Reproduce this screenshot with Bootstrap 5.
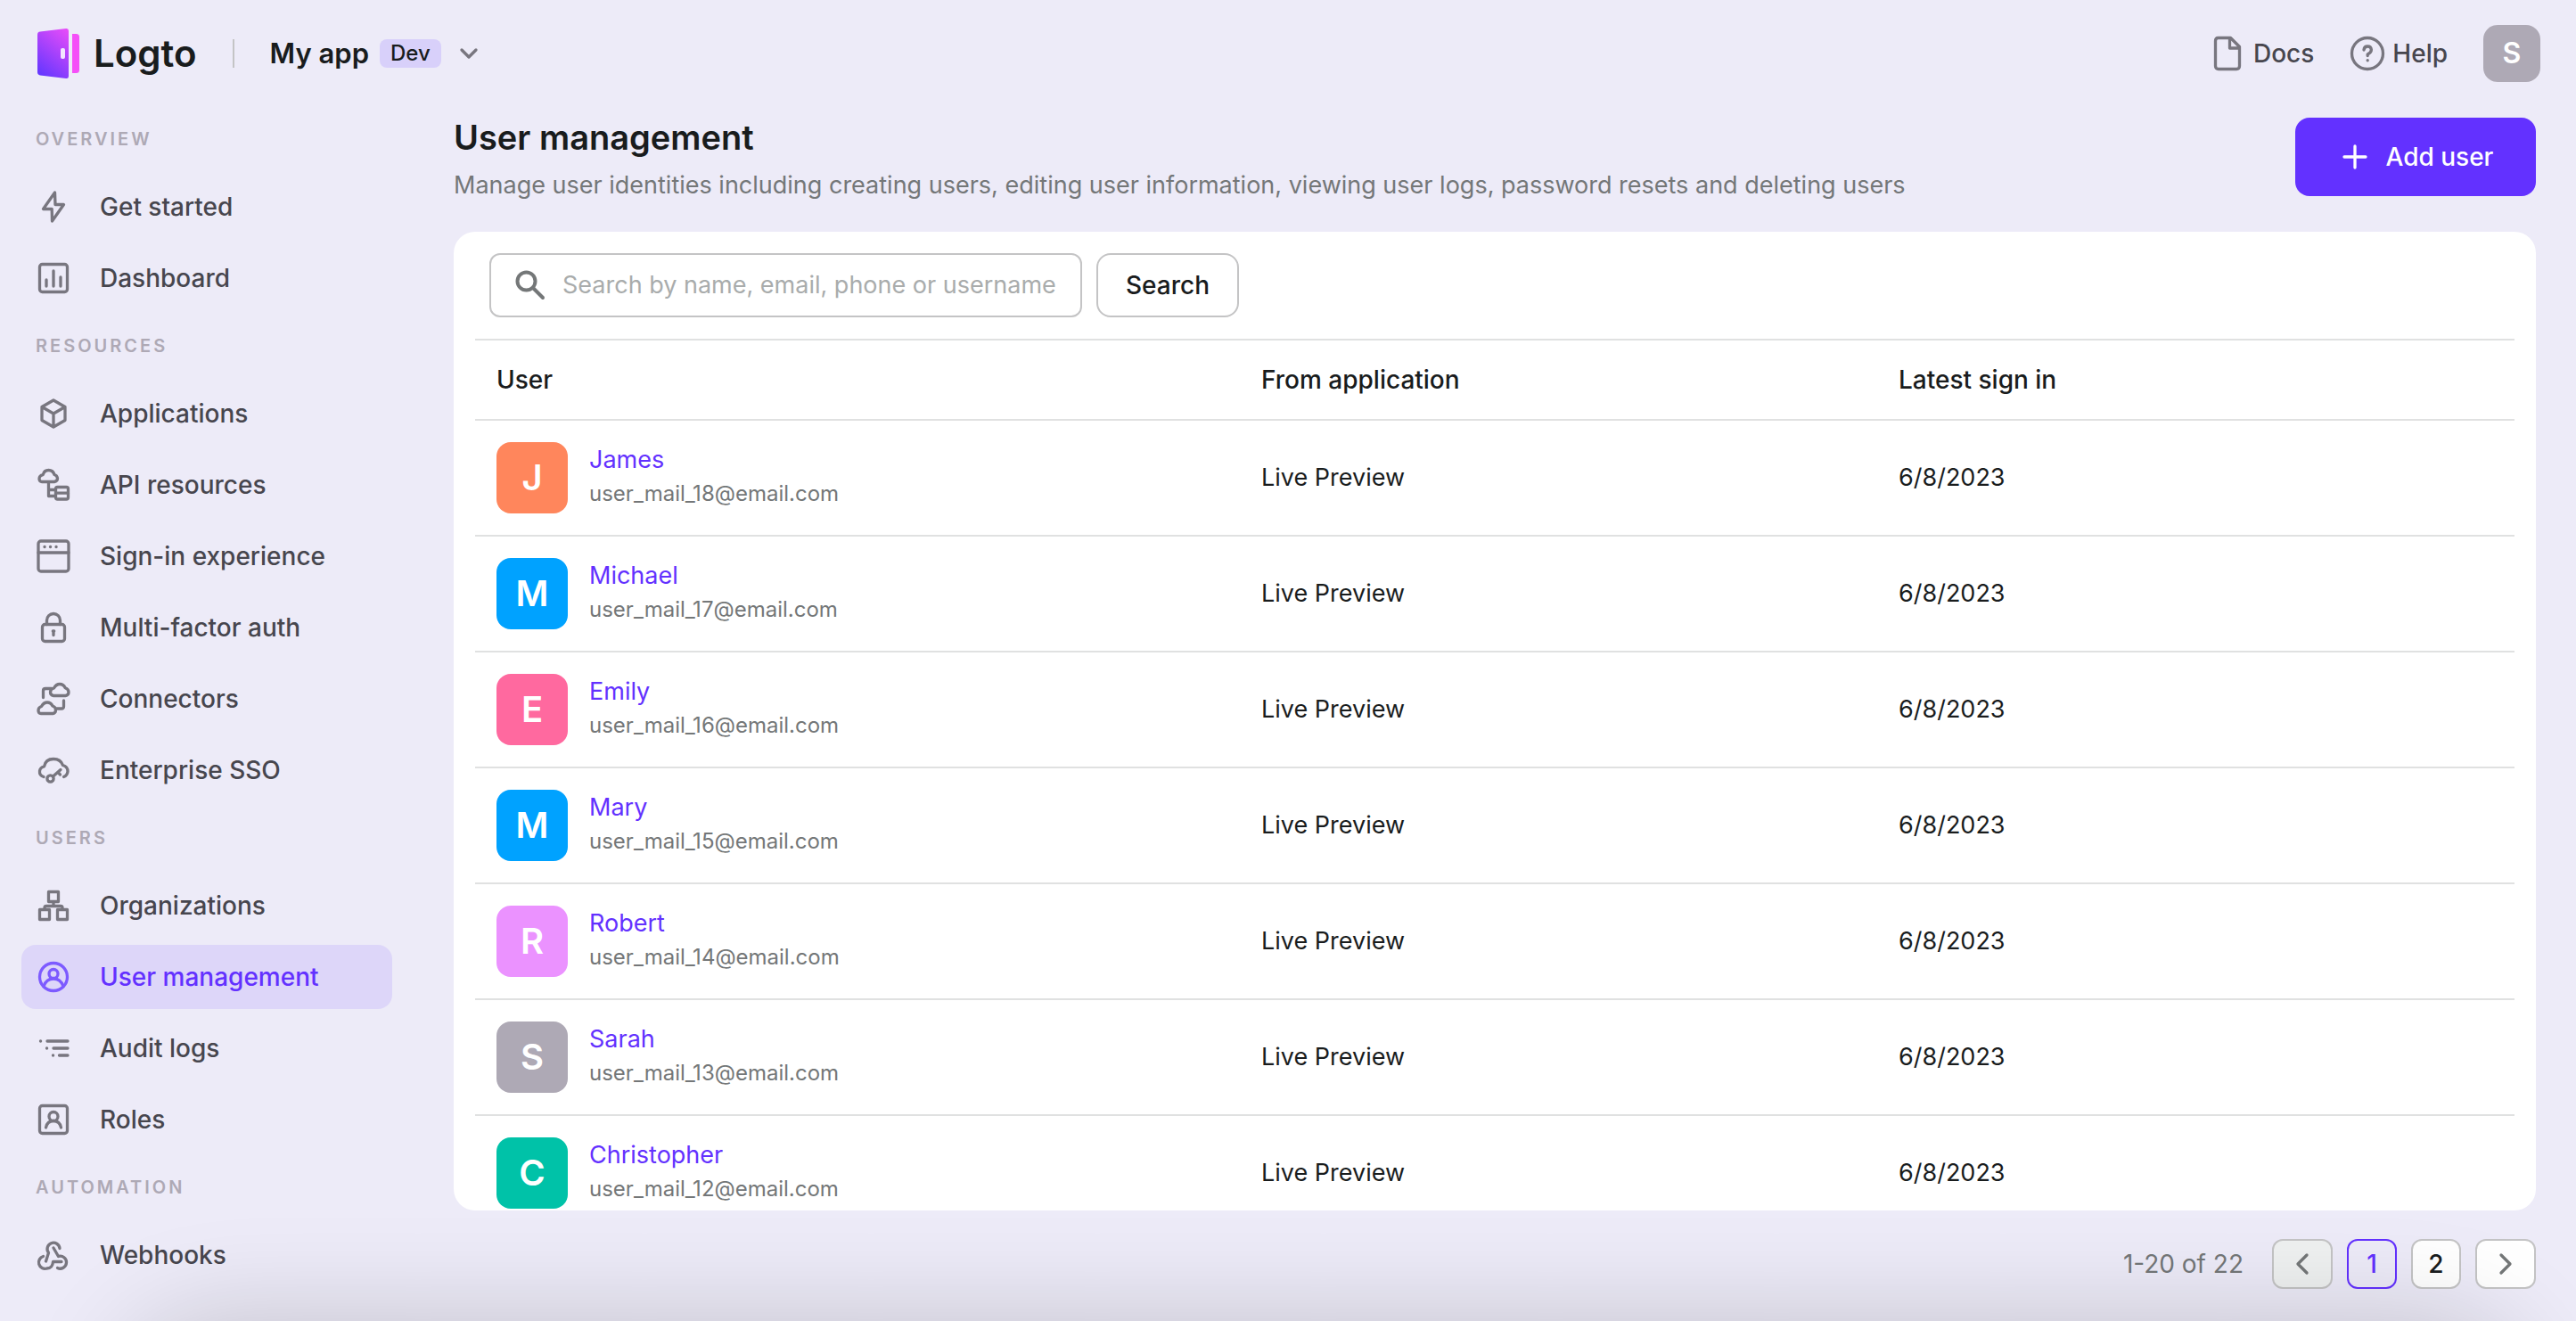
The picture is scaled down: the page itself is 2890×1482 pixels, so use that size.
<!DOCTYPE html>
<html lang="en">
<head>
<meta charset="utf-8">
<meta name="viewport" content="width=device-width, initial-scale=1">
<title>User management - Logto</title>
<link href="https://cdn.jsdelivr.net/npm/bootstrap@5.3.0/dist/css/bootstrap.min.css" rel="stylesheet">
<style>
  :root {
    --ink: #191c1d; --ink-2: #47464e; --muted: #747778; --icon: #78767f;
    --brand: #6331ff; --line: #e0e1e1; --edge: #c4c4c5;
  }
  body { font-family: Inter, "Liberation Sans", sans-serif; font-size: 28px; line-height: 40px; color: var(--ink); background: #edebf8; }
  a { text-decoration: none; }
  svg { flex: none; fill: none; stroke: currentColor; stroke-width: 3.3; stroke-linecap: round; stroke-linejoin: round; }
  .topbar { height: 120px; padding: 0 40px; }
  .brand-name { font-size: 42px; font-weight: 600; color: var(--ink); margin-left: 16px; }
  .logo { stroke: none; }
  .rule { width: 2px; height: 32px; background: var(--edge); margin: 0 40px; }
  .tenant { border: 0; background: none; padding: 0; color: var(--ink); font-size: 31px; font-weight: 600; gap: 12px; }
  .env-tag { font-size: 24px; line-height: 32px; font-weight: 500; background: #d8d0fa; border-radius: 8px; padding: 0 12px; }
  .top-nav { gap: 40px; }
  .toplink { color: var(--ink-2); font-weight: 500; }
  .tile { display: flex; align-items: center; justify-content: center; width: 80px; height: 80px; border-radius: 16px; color: #fff; font-size: 40px; font-weight: 600; flex: none; }
  .tile-sm { width: 64px; height: 64px; font-size: 32px; background: #aea9b5; border: 0; padding: 0; }
  .icon { color: var(--icon); }
  .soft { color: var(--muted); }
  .side { width: 509px; flex: none; padding: 0 69px 0 24px; }
  .side h2 { font-size: 20px; line-height: 32px; font-weight: 600; letter-spacing: 3px; text-transform: uppercase; color: #aea9b5; margin: 0; padding: 20px 16px 24px; }
  .side ul + h2 { padding-top: 24px; }
  .side .nav-link { height: 72px; padding: 0 16px; gap: 32px; border-radius: 16px; color: var(--ink-2); font-weight: 500; }
  .side .nav-link svg { color: var(--icon); }
  .side .nav-link.active { background: #ddd6f9; color: var(--brand); }
  .side .nav-link.active svg { color: #7d5bff; }
  .workspace { padding-right: 45px; height: calc(100vh - 120px); }
  .page-head { padding-top: 12px; }
  h1 { font-size: 38px; line-height: 44px; font-weight: 600; margin: 0 0 12px; }
  .page-head p, .users td, .search-box input { font-size: 27px; }
  .add-btn { height: 88px; width: 270px; border-radius: 16px; font-size: 28px; font-weight: 500; background: var(--brand); border: 0; color: #fff; gap: 20px; padding: 0 12px 0 16px; }
  .panel { border: 0; border-radius: 24px; padding: 24px 24px 0; margin-top: 32px; overflow: hidden; min-height: 0; }
  .search-box { width: 665px; height: 72px; border: 2px solid var(--edge); border-radius: 12px; padding: 0 24px; gap: 16px; color: var(--muted); }
  .search-box svg { stroke-width: 4; }
  .search-box input { border: 0; outline: 0; background: none; min-width: 0; padding: 0; color: var(--ink); }
  .search-box input::placeholder { color: #a9acac; opacity: 1; }
  .plain-btn { border: 2px solid var(--edge); background: #fff; color: var(--ink); font-size: 28px; line-height: 40px; font-weight: 500; padding: 0; display: flex; align-items: center; justify-content: center; }
  .search-btn { width: 160px; border-radius: 16px; }
  .users { margin: 24px 0 0; table-layout: fixed; border-top: 2px solid var(--line); color: var(--ink); }
  .users th, .users td { border-bottom: 2px solid var(--line); padding: 0 24px; vertical-align: middle; color: var(--ink); }
  .users th { height: 90px; font-weight: 500; }
  .users td { height: 130px; }
  .users .who { padding-bottom: 6px; }
  .users .name { color: var(--brand); line-height: 40px; margin-bottom: 2px; }
  .users .mail { font-size: 24px; line-height: 32px; color: var(--muted); }
  .pager { height: 56px; margin: 32px 0 36px; }
  .pager .plain-btn { width: 56px; height: 56px; border-radius: 12px; }
  .pager .step { width: 68px; color: var(--muted); }
  .pager .off { background: #eff1f1; }
  .pager .here { background: none; border-color: var(--brand); color: var(--brand); }
  .dock-shade { position: fixed; left: 140px; right: 60px; top: 100vh; height: 300px; border-radius: 100px; box-shadow: 0 0 120px rgba(0,0,0,.18); pointer-events: none; }
</style>
<script src="https://cdn.jsdelivr.net/npm/bootstrap@5.3.0/dist/js/bootstrap.bundle.min.js"></script>
</head>
<body class="vh-100 overflow-hidden">
<header class="topbar d-flex align-items-center">
  <a href="#" class="d-flex align-items-center" aria-label="Logto">
    <svg class="logo" width="49" height="68" viewBox="0 0 49 68">
      <defs><linearGradient id="door" x1="0" y1="56" x2="42" y2="4" gradientUnits="userSpaceOnUse"><stop stop-color="#6136ff"/><stop offset="1" stop-color="#f54ff8"/></linearGradient></defs>
      <path fill="url(#door)" d="M5 9.600 34 6q3-.4 3 2.500V59.500q0 2.900-3 2.500L5 58.400Q2 58 2 55V13q0-3 3-3.400Z"/>
      <path fill="#f54ff8" d="M41 12h4.500q3.500 0 3.500 3.500v37q0 3.500-3.500 3.500H41Z"/>
      <rect x="28" y="28" width="5" height="12" rx="2" fill="#f3e6ff"/>
    </svg>
    <span class="brand-name">Logto</span>
  </a>
  <span class="rule"></span>
  <button class="tenant d-flex align-items-center" type="button">
    <span>My app</span><span class="env-tag">Dev</span>
    <svg class="icon ms-2" width="22" height="14" viewBox="0 0 22 14"><path d="m3 3 8 8 8-8"/></svg>
  </button>
  <nav class="top-nav d-flex align-items-center ms-auto">
    <a href="#" class="toplink d-flex align-items-center gap-2"><svg class="icon" width="40" height="40" viewBox="0 0 40 40"><path d="M8.500 2.500h14l10 10V34q0 3.500-3.500 3.500H9Q5.500 37.500 5.500 34V6q0-3.500 3-3.500ZM21.500 2.500V14h11"/></svg>Docs</a>
    <a href="#" class="toplink d-flex align-items-center gap-2"><svg class="icon" width="40" height="40" viewBox="0 0 40 40"><circle cx="20" cy="20" r="17.500"/><path d="M16 16q.4-4 4.200-4t4.200 3.700q0 3-4.200 5.300v1.500M20.200 27.600v.2"/></svg>Help</a>
    <button type="button" class="tile tile-sm" aria-label="Account">S</button>
  </nav>
</header>
<div class="d-flex">
  <aside class="side">
    <h2>Overview</h2>
    <ul class="nav flex-column gap-2">
      <li><a href="#" class="nav-link d-flex align-items-center"><svg width="40" height="40" viewBox="0 0 40 40"><path d="M21.500 4 8.500 22.500h9.700L18.500 36 31.500 17.500H22Z"/></svg>Get started</a></li>
      <li><a href="#" class="nav-link d-flex align-items-center"><svg width="40" height="40" viewBox="0 0 40 40"><rect x="4.500" y="4.500" width="31" height="31" rx="3"/><path d="M12 22v7M20 12v17M28 19v10"/></svg>Dashboard</a></li>
    </ul>
    <h2>Resources</h2>
    <ul class="nav flex-column gap-2">
      <li><a href="#" class="nav-link d-flex align-items-center"><svg width="40" height="40" viewBox="0 0 40 40"><path d="M20 5 33 12.500v15L20 35 7 27.500v-15ZM7.500 12.800 20 20l12.500-7.200M20 20v14.500"/></svg>Applications</a></li>
      <li><a href="#" class="nav-link d-flex align-items-center"><svg width="40" height="40" viewBox="0 0 40 40"><path d="M7 16.500h14q3.500-.5 3.500-4-.5-3.200-3.500-4Q19.500 3.500 14.500 3.500T8.200 8.700Q4 9.500 4 13.500q.5 3 3 3ZM14.500 17v15.500h8M14.500 25.500h8M22.500 29.200h14"/><rect x="22.500" y="22.500" width="14" height="13.500" rx="2"/></svg>API resources</a></li>
      <li><a href="#" class="nav-link d-flex align-items-center"><svg width="40" height="40" viewBox="0 0 40 40"><rect x="3" y="3" width="34" height="34" rx="3"/><path d="M3 16h34M10 9.500h.1M16.500 9.500h.1M23 9.500h.1"/></svg>Sign-in experience</a></li>
      <li><a href="#" class="nav-link d-flex align-items-center"><svg width="40" height="40" viewBox="0 0 40 40"><rect x="7.500" y="16.500" width="25" height="19" rx="3"/><path d="M12.500 16.500v-4.500a7.500 7.500 0 0 1 15 0v4.500M20 24v4.500M19.300 24h1.400"/></svg>Multi-factor auth</a></li>
      <li><a href="#" class="nav-link d-flex align-items-center"><svg width="40" height="40" viewBox="0 0 40 40"><path d="M20 16.500h13.500q3.500-.5 3.500-4t-3.800-4.800Q31 3.500 27 3.500t-6.500 4.500q-4 1-4 4.500t3.500 4ZM18 8.500H11q-2.500 0-2.500 2.500v7.500M6 36.500H19.500q3-.5 3-4t-3.500-4.500q-2-4-6-4T6.500 28.500Q3 29.500 3 33t3 3.500ZM22.500 31H29q2.500 0 2.500-2.500V22"/></svg>Connectors</a></li>
      <li><a href="#" class="nav-link d-flex align-items-center"><svg width="40" height="40" viewBox="0 0 40 40"><path d="M9 27.500Q4 26 4.500 21q.5-4 5-5Q11 7.500 20 7.500q8 0 10.500 7 5.500 1.500 5.500 7-.5 4.500-4.500 6"/><circle cx="16.500" cy="29.500" r="3.600"/><path d="m19.500 27 8.500-7.500M25 22.500l2.500 2.500"/></svg>Enterprise SSO</a></li>
    </ul>
    <h2>Users</h2>
    <ul class="nav flex-column gap-2">
      <li><a href="#" class="nav-link d-flex align-items-center"><svg width="40" height="40" viewBox="0 0 40 40"><rect x="14.500" y="4.500" width="11" height="11"/><rect x="4.500" y="24.500" width="11" height="11"/><rect x="24.500" y="24.500" width="11" height="11"/><path d="M20 16v4.500M10 24v-1.500q0-2 2-2h16q2 0 2 2V24"/></svg>Organizations</a></li>
      <li><a href="#" class="nav-link d-flex align-items-center active" aria-current="page"><svg width="40" height="40" viewBox="0 0 40 40"><circle cx="20" cy="20" r="15.500"/><circle cx="20" cy="16.500" r="5"/><path d="M9 30.500q3-8.500 11-8.500t11 8.500"/></svg>User management</a></li>
      <li><a href="#" class="nav-link d-flex align-items-center"><svg width="40" height="40" viewBox="0 0 40 40"><path d="M13 12h23M5.500 12h.1M20 20h16M12.500 20h.1M26.500 28H36M19.500 28h.1"/></svg>Audit logs</a></li>
      <li><a href="#" class="nav-link d-flex align-items-center"><svg width="40" height="40" viewBox="0 0 40 40"><rect x="4.500" y="4.500" width="31" height="31" rx="3"/><circle cx="20" cy="16.500" r="5"/><path d="M11.500 29q1.500-7.500 8.500-7.500t8.500 7.500"/></svg>Roles</a></li>
    </ul>
    <h2>Automation</h2>
    <ul class="nav flex-column gap-2">
      <li><a href="#" class="nav-link d-flex align-items-center"><svg width="40" height="40" viewBox="0 0 40 40"><path d="M27 12.500a7 7 0 1 0-12.500 5L11.500 27M20 12l5.500 9.500a7 7 0 1 1-1 13M29 27.500H19.500q-.5 7.500-7 7.500a7 7 0 0 1-4-13.500"/></svg>Webhooks</a></li>
    </ul>
  </aside>
  <main class="workspace flex-grow-1 d-flex flex-column">
    <div class="page-head d-flex justify-content-between align-items-start">
      <div>
        <h1>User management</h1>
        <p class="m-0 soft">Manage user identities including creating users, editing user information, viewing user logs, password resets and deleting users</p>
      </div>
      <button type="button" class="btn add-btn d-flex align-items-center justify-content-center"><svg width="30" height="30" viewBox="0 0 30 30"><path d="M15 3v24M3 15h24"/></svg>Add user</button>
    </div>
    <section class="card panel flex-grow-1">
      <form class="d-flex gap-3 px-3" role="search">
        <label class="search-box d-flex align-items-center">
          <svg width="40" height="40" viewBox="0 0 40 40"><circle cx="15.500" cy="15.500" r="10"/><path d="m23 23 11 11"/></svg>
          <input type="text" class="flex-grow-1" aria-label="Search users" placeholder="Search by name, email, phone or username">
        </label>
        <button class="plain-btn search-btn" type="button">Search</button>
      </form>
      <table class="table users">
        <colgroup><col style="width:37.5%"><col style="width:31.25%"><col style="width:31.25%"></colgroup>
        <thead><tr><th scope="col">User</th><th scope="col">From application</th><th scope="col">Latest sign in</th></tr></thead>
        <tbody id="rows"></tbody>
      </table>
    </section>
    <nav class="pager d-flex align-items-center justify-content-end gap-3" aria-label="Pages">
      <span class="me-3 soft">1-20 of 22</span>
      <button type="button" class="plain-btn step off" aria-label="Previous"><svg width="24" height="28" viewBox="0 0 24 28"><path d="M17 4 7 14l10 10"/></svg></button>
      <button type="button" class="plain-btn here">1</button>
      <button type="button" class="plain-btn">2</button>
      <button type="button" class="plain-btn step" aria-label="Next"><svg width="24" height="28" viewBox="0 0 24 28"><path d="m7 4 10 10L7 24"/></svg></button>
    </nav>
  </main>
</div>
<div class="dock-shade"></div>
<script>
  const users = [
    ["James", 18, "#ff865c"], ["Michael", 17, "#00a2ff"], ["Emily", 16, "#ff699f"], ["Mary", 15, "#00a2ff"],
    ["Robert", 14, "#eb92ff"], ["Sarah", 13, "#aea9b5"], ["Christopher", 12, "#00c2a8"]
  ];
  document.getElementById("rows").innerHTML = users.map(([name, n, color]) => `
    <tr>
      <td><div class="d-flex align-items-center gap-4">
        <span class="tile" style="background:${color}">${name[0]}</span>
        <div class="who"><a href="#" class="name d-block">${name}</a><div class="mail">user_mail_${n}@email.com</div></div>
      </div></td>
      <td>Live Preview</td><td>6/8/2023</td>
    </tr>`).join("");
</script>
</body>
</html>
